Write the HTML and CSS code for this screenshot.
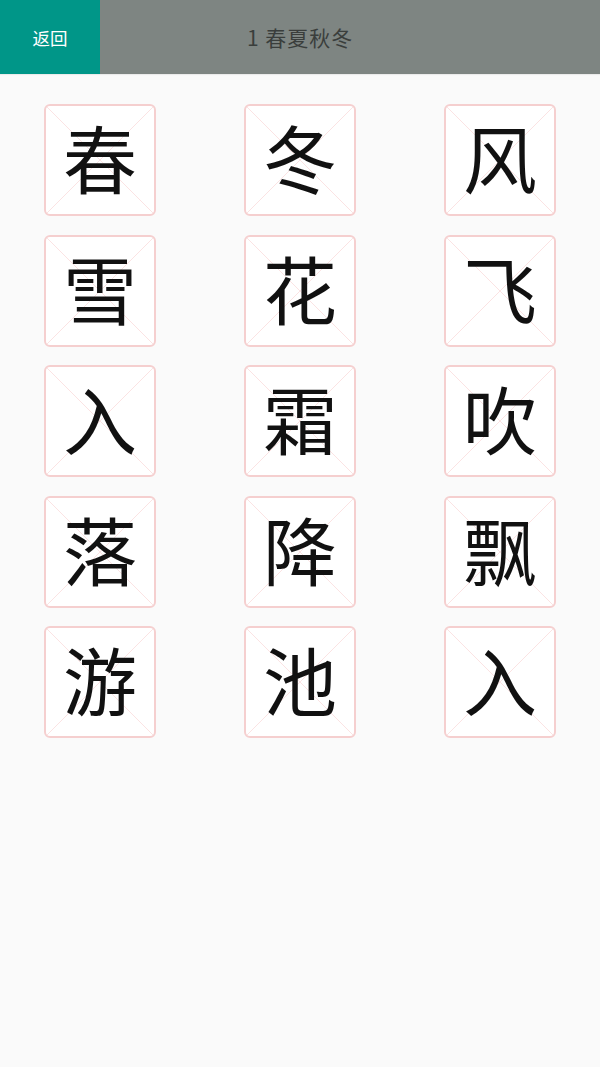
FILE: index.html
```html
<!DOCTYPE html>
<html lang="zh">
<head>
<meta charset="utf-8">
<link rel="stylesheet" href="styles.css">
</head>
<body>
<div class="header">
  <div class="back">返回</div>
  <div class="title">1 春夏秋冬</div>
</div>
<div class="grid">
  <div class="cell"><div class="card">春</div></div>
  <div class="cell"><div class="card">冬</div></div>
  <div class="cell"><div class="card">风</div></div>
  <div class="cell"><div class="card">雪</div></div>
  <div class="cell"><div class="card">花</div></div>
  <div class="cell"><div class="card">飞</div></div>
  <div class="cell"><div class="card">入</div></div>
  <div class="cell"><div class="card">霜</div></div>
  <div class="cell"><div class="card">吹</div></div>
  <div class="cell"><div class="card">落</div></div>
  <div class="cell"><div class="card">降</div></div>
  <div class="cell"><div class="card">飘</div></div>
  <div class="cell"><div class="card">游</div></div>
  <div class="cell"><div class="card">池</div></div>
  <div class="cell"><div class="card">入</div></div>
</div>
</body>
</html>
```
FILE: styles.css
```css
html, body {
  margin: 0;
  padding: 0;
}
body {
  background: #fafafa;
  width: 600px;
  height: 1067px;
  font-family: "Noto Sans CJK SC", "Noto Sans", sans-serif;
}
.header {
  display: flex;
  height: 74px;
  background: #7e8582;
  box-shadow: 0 1px 1px rgba(0,0,0,0.06);
}
.back {
  width: 100px;
  background: #009688;
  color: #ffffff;
  font-size: 17.5px;
  display: flex;
  align-items: center;
  justify-content: center;
}
.title {
  padding-left: 147px;
  display: flex;
  align-items: center;
  font-size: 21px;
  color: #3a3e3c;
  letter-spacing: 1px;
}
.grid {
  display: grid;
  grid-template-columns: repeat(3, 200px);
  row-gap: 18.5px;
  padding-top: 30px;
}
.cell {
  display: flex;
  justify-content: center;
}
.card {
  width: 108px;
  height: 100px;
  padding-bottom: 8px;
  border: 2px solid #f5cfcf;
  border-radius: 6px;
  background:
    linear-gradient(to bottom right, transparent calc(50% - 0.6px), #fbe3e3 50%, transparent calc(50% + 0.6px)),
    linear-gradient(to top right, transparent calc(50% - 0.6px), #fbe3e3 50%, transparent calc(50% + 0.6px)),
    linear-gradient(to right, transparent calc(50% - 0.5px), #fbe0e0 50%, transparent calc(50% + 0.5px)),
    linear-gradient(to bottom, transparent calc(50% - 0.5px), #fbe0e0 50%, transparent calc(50% + 0.5px)),
    #ffffff;
  display: flex;
  align-items: center;
  justify-content: center;
  font-size: 74px;
  line-height: 1;
  color: #111111;
  font-weight: 400;
}
```
